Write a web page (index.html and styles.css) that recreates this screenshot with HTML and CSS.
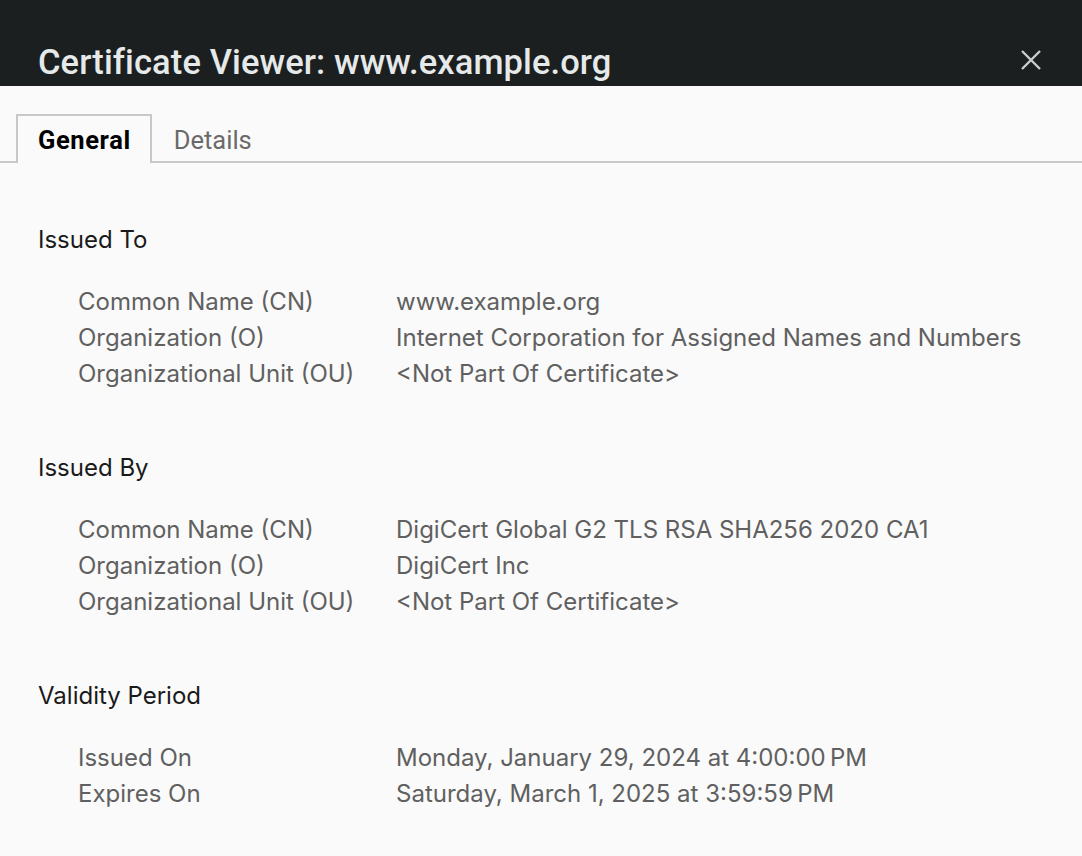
FILE: index.html
```html
<!DOCTYPE html>
<html>
<head>
<meta charset="utf-8">
<link rel="stylesheet" href="styles.css">
</head>
<body>
<div class="dialog">
  <header class="titlebar">
    <h1 class="title">Certificate Viewer: www.example.org</h1>
    <button class="close" aria-label="Close">
      <svg width="22" height="22" viewBox="0 0 22 22"><path d="M2 2L20 20M20 2L2 20" stroke="#c9cdcd" stroke-width="2.4" stroke-linecap="butt"/></svg>
    </button>
  </header>
  <nav class="tabs">
    <div class="tab active">General</div>
    <div class="tab">Details</div>
  </nav>
  <main class="content">
    <section class="section">
      <h2 class="heading">Issued To</h2>
      <div class="rows">
        <div class="label">Common Name (CN)</div><div class="value">www.example.org</div>
        <div class="label">Organization (O)</div><div class="value">Internet Corporation for Assigned Names and Numbers</div>
        <div class="label">Organizational Unit (OU)</div><div class="value">&lt;Not Part Of Certificate&gt;</div>
      </div>
    </section>
    <section class="section">
      <h2 class="heading">Issued By</h2>
      <div class="rows">
        <div class="label">Common Name (CN)</div><div class="value">DigiCert Global G2 TLS RSA SHA256 2020 CA1</div>
        <div class="label">Organization (O)</div><div class="value">DigiCert Inc</div>
        <div class="label">Organizational Unit (OU)</div><div class="value">&lt;Not Part Of Certificate&gt;</div>
      </div>
    </section>
    <section class="section">
      <h2 class="heading">Validity Period</h2>
      <div class="rows">
        <div class="label">Issued On</div><div class="value">Monday, January 29, 2024 at 4:00:00&#8239;PM</div>
        <div class="label">Expires On</div><div class="value">Saturday, March 1, 2025 at 3:59:59&#8239;PM</div>
      </div>
    </section>
  </main>
</div>
</body>
</html>
```
FILE: styles.css
```css
html, body {
  margin: 0;
  padding: 0;
  background: #fafafa;
}
.dialog {
  width: 1082px;
  height: 856px;
  background: #fafafa;
  font-family: Inter, "Noto Sans", sans-serif;
  overflow: hidden;
}
.titlebar {
  height: 86px;
  background: #1b1f1f;
  display: flex;
  align-items: flex-end;
  justify-content: space-between;
  padding: 0 40px 0 38px;
  box-sizing: border-box;
}
.title {
  margin: 0 0 2px 0;
  font-family: Roboto, sans-serif;
  font-weight: 500;
  font-size: 34.5px;
  line-height: 44px;
  color: #e6e9e9;
  letter-spacing: 0.1px;
}
.close {
  background: none;
  border: none;
  padding: 0;
  margin-bottom: 15px;
  width: 22px;
  height: 22px;
  display: flex;
}
.tabs {
  display: flex;
  margin-top: 28px;
  padding-left: 16px;
  border-bottom: 2px solid #c8c8c8;
  height: 47px;
}
.tab {
  font-family: Roboto, sans-serif;
  font-size: 25.5px;
  color: #6a6a6a;
  padding: 0 20px;
  line-height: 49px;
  border: 2px solid transparent;
  border-bottom: none;
}
.tab.active {
  color: #000;
  font-weight: 700;
  letter-spacing: 0.6px;
  padding-right: 19px;
  border-color: #c8c8c8;
  background: #fafafa;
  margin-bottom: -2px;
}
.content {
  padding: 62px 0 0 38px;
}
.section {
  margin-bottom: 64px;
}
.heading {
  margin: 0;
  font-size: 24px;
  font-weight: 400;
  line-height: 30px;
  color: #1a1a1a;
}
.rows {
  display: grid;
  grid-template-columns: 318px auto;
  margin-top: 32px;
  padding-left: 40px;
  row-gap: 6px;
}
.label, .value {
  font-size: 24px;
  line-height: 30px;
  color: #606060;
}
```
